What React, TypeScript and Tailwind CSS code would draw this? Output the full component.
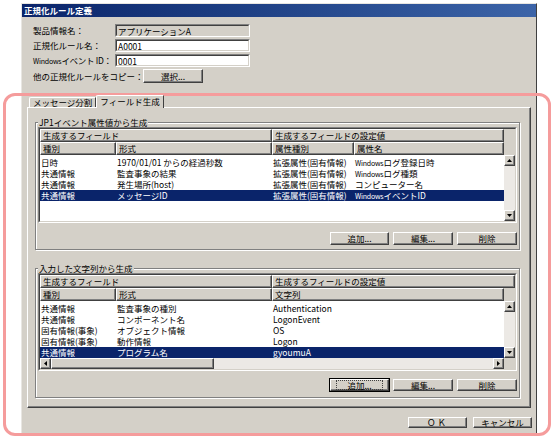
import React from "react";

const FONT = "font-['Noto_Sans_CJK_JP','Liberation_Sans',sans-serif]";
const FACE = "bg-[#d4d0c8]";
const RAISED =
  "border border-t-white border-l-white border-r-[#404040] border-b-[#404040] shadow-[inset_-1px_-1px_0_#808080]";

function Sunken({
  className = "",
  inner = "",
  children,
}: {
  className?: string;
  inner?: string;
  children?: React.ReactNode;
}) {
  return (
    <div className={`border border-t-[#808080] border-l-[#808080] border-r-white border-b-white ${className}`}>
      <div className={`h-full border border-t-[#404040] border-l-[#404040] border-r-[#d4d0c8] border-b-[#d4d0c8] ${inner}`}>
        {children}
      </div>
    </div>
  );
}

function Button({ label, className = "", def = false }: { label: string; className?: string; def?: boolean }) {
  return (
    <div
      className={`${FACE} ${RAISED} ${def ? "outline outline-1 outline-black" : ""} flex items-center justify-center leading-none whitespace-nowrap ${className}`}
    >
      {def ? <span className="border border-dotted border-[#404040] px-[10px] leading-[8px]">{label}</span> : label}
    </div>
  );
}

type Dir = "up" | "down" | "left" | "right";
const ARROWS: Record<Dir, { w: number; h: number; pts: string }> = {
  up: { w: 5, h: 3, pts: "2.5,0 5,3 0,3" },
  down: { w: 5, h: 3, pts: "0,0 5,0 2.5,3" },
  left: { w: 3, h: 5, pts: "3,0 3,5 0,2.5" },
  right: { w: 3, h: 5, pts: "0,0 3,2.5 0,5" },
};

function Arrow({ dir }: { dir: Dir }) {
  const a = ARROWS[dir];
  return (
    <div className={`${FACE} ${RAISED} w-[11px] h-[11px] shrink-0 flex items-center justify-center`}>
      <svg width={a.w} height={a.h} viewBox={`0 0 ${a.w} ${a.h}`}>
        <polygon points={a.pts} fill="#000" />
      </svg>
    </div>
  );
}

function VScroll() {
  return (
    <div className="w-[11px] shrink-0 flex flex-col">
      <Arrow dir="up" />
      <div className="flex-1 bg-[#ece9e5]" />
      <Arrow dir="down" />
    </div>
  );
}

// "Windows" is drawn in a narrow small face in the original dialog
function Txt({ s }: { s: string }) {
  if (s.startsWith("Windows")) {
    return (
      <>
        <span className="text-[7px] tracking-[-0.2px]">Windows</span>
        {s.slice(7)}
      </>
    );
  }
  return <>{s}</>;
}

function Head({ w, children }: { w: string; children?: React.ReactNode }) {
  return (
    <div
      className={`${w} h-full shrink-0 ${RAISED} pl-[2px] leading-[11px] whitespace-nowrap overflow-hidden`}
    >
      {children}
    </div>
  );
}

function Row({ cells, widths, selected = false }: { cells: string[]; widths: string[]; selected?: boolean }) {
  return (
    <div className={`flex h-[11px] leading-[11px] ${selected ? "bg-[#0a246a] text-white" : ""}`}>
      {cells.map((c, i) => (
        <div key={i} className={`${widths[i]} shrink-0 pl-[1px] whitespace-nowrap overflow-hidden`}>
          <Txt s={c} />
        </div>
      ))}
    </div>
  );
}

const ATTR_ROWS = [
  ["日時", "1970/01/01 からの経過秒数", "拡張属性(固有情報)", "Windowsログ登録日時"],
  ["共通情報", "監査事象の結果", "拡張属性(固有情報)", "Windowsログ種類"],
  ["共通情報", "発生場所(host)", "拡張属性(固有情報)", "コンピューター名"],
  ["共通情報", "メッセージID", "拡張属性(固有情報)", "WindowsイベントID"],
];

const TEXT_ROWS = [
  ["共通情報", "監査事象の種別", "Authentication"],
  ["共通情報", "コンポーネント名", "LogonEvent"],
  ["固有情報(事象)", "オブジェクト情報", "OS"],
  ["固有情報(事象)", "動作情報", "Logon"],
  ["共通情報", "プログラム名", "gyoumuA"],
];

function Group({ title, className = "", children }: { title: string; className?: string; children: React.ReactNode }) {
  return (
    <fieldset
      className={`border border-[#808080] shadow-[inset_1px_1px_0_#fff,1px_1px_0_#fff] px-[2px] ${className}`}
    >
      <legend className={`${FACE} px-[1px] leading-[10px]`}>{title}</legend>
      {children}
    </fieldset>
  );
}

function ButtonRow({ first, className = "" }: { first?: boolean; className?: string }) {
  return (
    <div className={`flex justify-end gap-[4px] ${className}`}>
      <Button label="追加..." className="w-[59px] h-full" def={first} />
      <Button label="編集..." className="w-[60px] h-full" />
      <Button label="削除" className="w-[60px] h-full" />
    </div>
  );
}

export default function App() {
  const w1 = ["w-[76px]", "w-[156px]", "w-[82px]", "w-[150px]"];
  const w2 = ["w-[76px]", "w-[156px]", "w-[232px]"];
  return (
    <div className={`relative w-[553px] h-[440px] bg-white overflow-hidden text-[8.5px] text-black ${FONT}`}>
      {/* window */}
      <div className="ml-[21px] mt-[3px] w-[516px] h-[431px] bg-[#d4d0c8] border border-t-[#e8e6e2] border-l-[#e8e6e2] border-r-[#404040] border-b-[#404040] flex flex-col">
        {/* title bar */}
        <div className="h-[13px] shrink-0 bg-gradient-to-r from-[#0a246a] to-[#3c64a8] text-white font-bold leading-[13px] pl-[2px]">
          正規化ルール定義
        </div>

        {/* form */}
        <div className="mt-[7px] pl-[11px] flex flex-col gap-[2px]">
          <div className="flex items-center h-[13px]">
            <span className="w-[82px] whitespace-nowrap">製品情報名：</span>
            <Sunken className="w-[135px] h-[13px]" inner="bg-[#d4d0c8] pl-[1px] leading-[10px]">
              アプリケーションA
            </Sunken>
          </div>
          <div className="flex items-center h-[13px]">
            <span className="w-[82px] whitespace-nowrap">正規化ルール名：</span>
            <Sunken className="w-[135px] h-[13px]" inner="bg-white pl-[1px] leading-[10px]">
              A0001
            </Sunken>
          </div>
          <div className="flex items-center h-[13px]">
            <span className="w-[82px] whitespace-nowrap tracking-[-0.3px]">
              <Txt s="Windowsイベント ID：" />
            </span>
            <Sunken className="w-[135px] h-[13px]" inner="bg-white pl-[1px] leading-[10px]">
              0001
            </Sunken>
          </div>
          <div className="flex items-center h-[14px]">
            <span className="w-[110px] whitespace-nowrap">他の正規化ルールをコピー：</span>
            <Button label="選択..." className="w-[60px] h-[14px]" />
          </div>
        </div>

        {/* tabs */}
        <div className="mt-[12px] ml-[5px] h-[12px] shrink-0 flex items-end pl-[2px]">
          <div className="h-[10px] px-[3px] border-t border-l border-r border-t-white border-l-white border-r-[#404040] rounded-tl-[2px] leading-[9px] whitespace-nowrap">
            メッセージ分割
          </div>
          <div className="relative z-10 -mb-[1px] h-[13px] px-[3px] bg-[#d4d0c8] border-t border-l border-r border-t-white border-l-white border-r-[#404040] rounded-tl-[2px] leading-[11px] whitespace-nowrap">
            フィールド生成
          </div>
        </div>

        {/* panel */}
        <div className={`ml-[5px] w-[504px] h-[301px] shrink-0 ${RAISED} pl-[7px] pr-[9px] pt-[9px]`}>
          <Group title="JP1イベント属性値から生成" className="w-[485px] pb-[4px]">
            <Sunken className="h-[96px]" inner="bg-white flex flex-col">
              <div className="flex h-[13px] shrink-0 bg-[#d4d0c8]">
                <Head w="w-[232px]">生成するフィールド</Head>
                <Head w="w-[232px]">生成するフィールドの設定値</Head>
              </div>
              <div className="flex h-[13px] shrink-0 bg-[#d4d0c8]">
                <Head w="w-[76px]">種別</Head>
                <Head w="w-[156px]">形式</Head>
                <Head w="w-[82px]">属性種別</Head>
                <Head w="w-[150px]">属性名</Head>
              </div>
              <div className="flex flex-1 min-h-0">
                <div className="flex-1 pt-[2px]">
                  {ATTR_ROWS.map((r, i) => (
                    <Row key={i} cells={r} widths={w1} selected={i === 3} />
                  ))}
                </div>
                <VScroll />
              </div>
            </Sunken>
            <ButtonRow className="mt-[9px] h-[13px]" />
          </Group>

          <Group title="入力した文字列から生成" className="w-[485px] mt-[13px] pb-[6px]">
            <Sunken className="h-[98px]" inner="bg-white flex flex-col">
              <div className="flex h-[13px] shrink-0 bg-[#d4d0c8]">
                <Head w="w-[232px]">生成するフィールド</Head>
                <Head w="w-[243px]">生成するフィールドの設定値</Head>
              </div>
              <div className="flex h-[13px] shrink-0 bg-[#d4d0c8]">
                <Head w="w-[76px]">種別</Head>
                <Head w="w-[156px]">形式</Head>
                <Head w="w-[232px]">文字列</Head>
              </div>
              <div className="flex flex-1 min-h-0">
                <div className="flex-1 pt-[2px]">
                  {TEXT_ROWS.map((r, i) => (
                    <Row key={i} cells={r} widths={w2} selected={i === 4} />
                  ))}
                </div>
                <VScroll />
              </div>
              <div className="flex h-[11px] shrink-0">
                <Arrow dir="left" />
                <div className={`${FACE} ${RAISED} w-[163px] h-full shrink-0`} />
                <div className="flex-1 bg-[#ece9e5]" />
                <Arrow dir="right" />
                <div className="w-[11px] bg-[#d4d0c8]" />
              </div>
            </Sunken>
            <ButtonRow first className="mt-[8px] h-[12px]" />
          </Group>
        </div>

        {/* dialog buttons */}
        <div className="mt-[9px] pr-[4px] flex justify-end gap-[6px]">
          <Button label="ＯＫ" className="w-[59px] h-[11px] tracking-[2px]" />
          <Button label="キャンセル" className="w-[59px] h-[11px]" />
        </div>
      </div>

      {/* annotation highlight */}
      <div className="absolute left-[3px] top-[93px] w-[548px] h-[343px] border-[3px] border-[#f59c9c] rounded-[12px] pointer-events-none" />
    </div>
  );
}
